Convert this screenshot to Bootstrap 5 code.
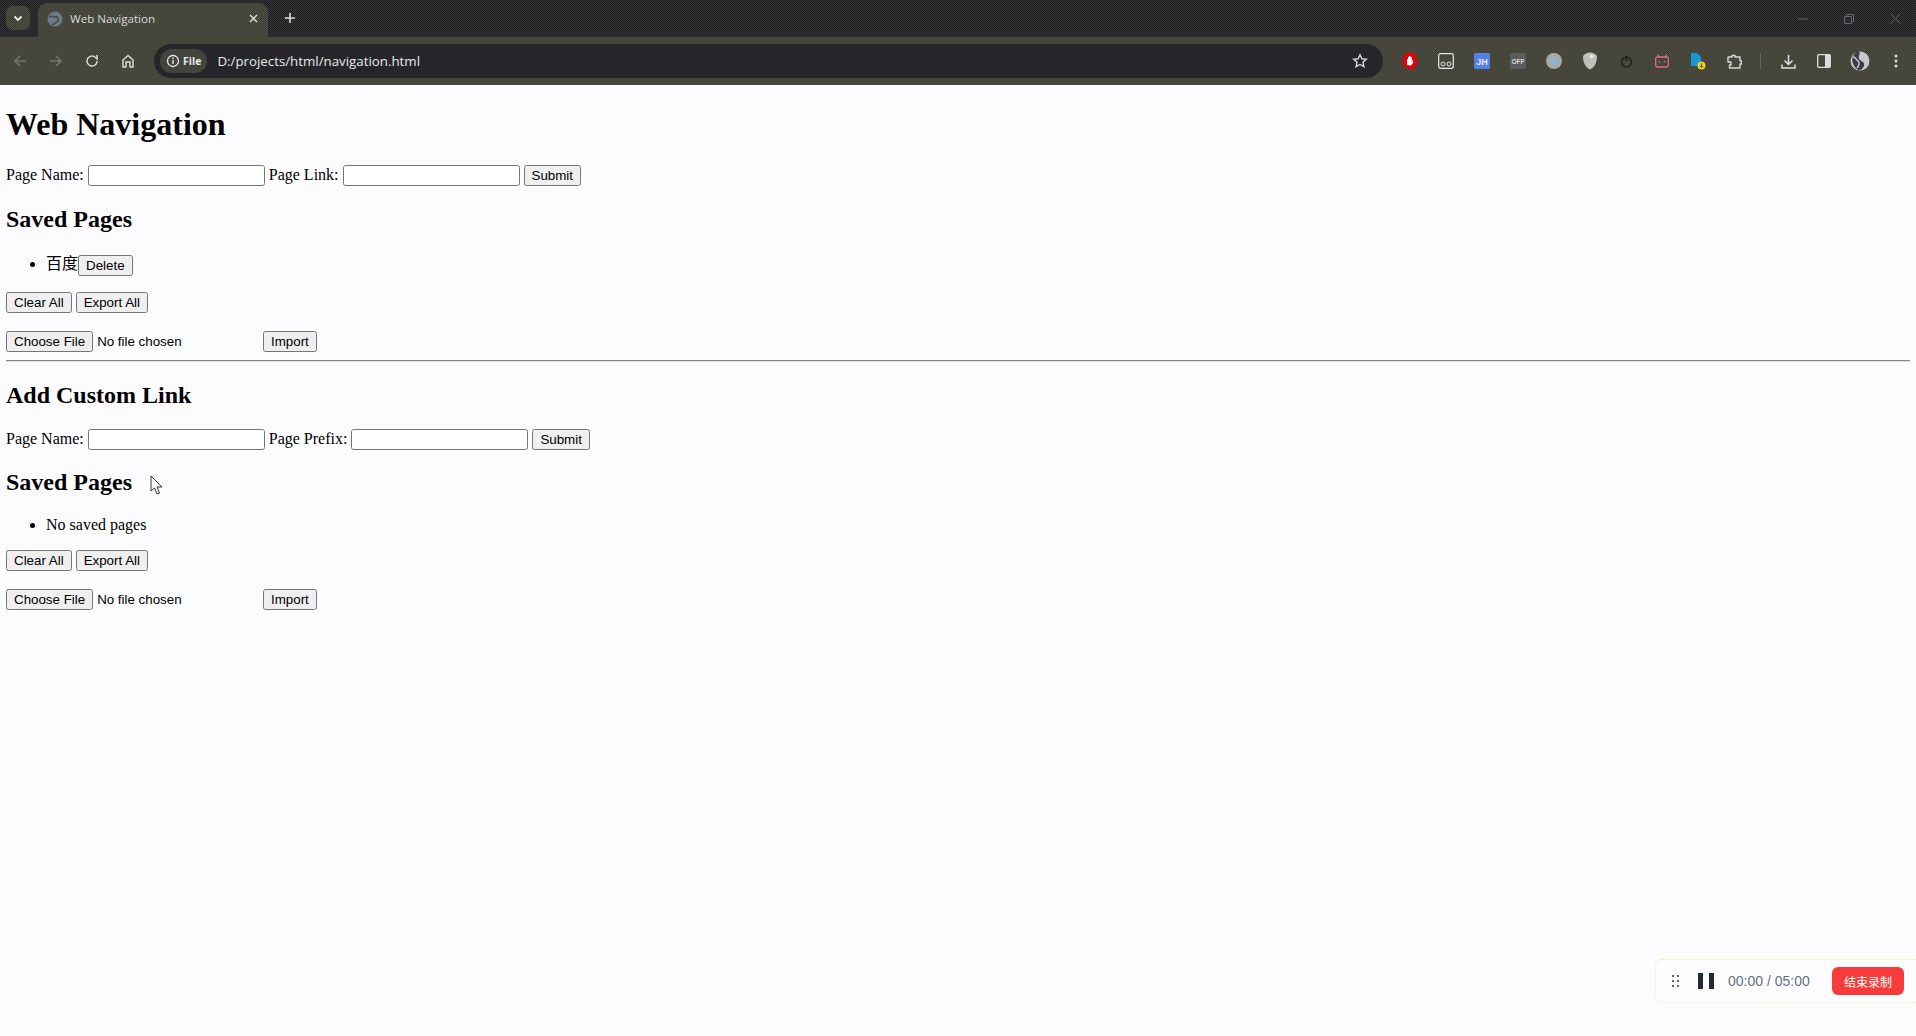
<!DOCTYPE html>
<html lang="en">
<head>
<meta charset="utf-8">
<title>Web Navigation</title>
<link href="https://cdn.jsdelivr.net/npm/bootstrap@5.3.0/dist/css/bootstrap.min.css" rel="stylesheet">
<style>
html,body{height:100%}
body{background:#fcfcff;color:#000;font-family:"Liberation Serif","Noto Sans CJK SC",serif;font-size:16px;line-height:normal;overflow:hidden;position:relative}
.tabstrip{height:37px;background:conic-gradient(#333335 25%,#212123 0 50%,#333335 0 75%,#212123 0) 0 0/2px 2px;color:#ddd;font-family:"Open Sans",sans-serif}
.tabchip{width:24px;height:24px;margin:6px 0 0 6px;background:conic-gradient(#51512e 25%,#3b3b4a 0 50%,#51512e 0 75%,#3b3b4a 0) 0 0/2px 2px;border-radius:7px}
.brtab{width:230px;height:34px;margin:3px 0 0 8px;background:conic-gradient(#51512e 25%,#3b3b4a 0 50%,#51512e 0 75%,#3b3b4a 0) 0 0/2px 2px;border-radius:9px 9px 0 0;padding:0 10px 3px 9px;font-size:11.6px;color:#d8d8d8;flex-shrink:0}
.favi{margin-right:7px}
.newtab{margin-left:16px;margin-top:-1px}
.winctl{gap:36px;padding-right:15px;margin-left:auto}
.toolbar{height:48px;background:conic-gradient(#51512e 25%,#3b3b4a 0 50%,#51512e 0 75%,#3b3b4a 0) 0 0/2px 2px;padding-left:12px;font-family:"Open Sans",sans-serif;color:#d0d0d0}
.navbtns{gap:20px;width:136px;flex-shrink:0}
.omni{width:1229px;height:34px;border-radius:17px;background:#26262a;padding:0 15px 0 6px;margin-left:6px;color:#e8e8e8;font-size:13.3px;flex-shrink:0}
.fileChip{height:24px;padding:0 6px;background:#44443f;border-radius:12px;font-size:10.5px;font-weight:700;gap:3px;margin-right:10px}
.exticons{margin-left:9px;flex-shrink:0}
.exticons>*{width:36px;display:flex;justify-content:center;align-items:center}
.exticons>.sepcell{width:18px}
.pagewrap{padding:0 6px}
.title1{font:700 32px "Liberation Serif",serif;margin:21.44px 0}
.title2{font:700 24px "Liberation Serif",serif;margin:19.92px 0}
.fieldrow{height:21px;display:flex;align-items:center;white-space:pre}
.tinput{width:177px;height:21px;border:1px solid #767676;border-radius:2.5px;background:#fff;padding:0;margin:0 4px}
.natbtn{font:13.33px "Liberation Sans",sans-serif;height:21px;padding:0 7px;border:1px solid #767676;border-radius:2.5px;background:#efefef;color:#000;margin:0}
.filepick{font:13.33px "Liberation Sans",sans-serif;width:253px;height:21px;margin:0;color:#000}
.filepick::file-selector-button{font:13.33px "Liberation Sans",sans-serif;height:21px;padding:0 7px;border:1px solid #767676;border-radius:2.5px;background:#efefef;color:#000;margin-right:4px}
.savedlist{margin:19.92px 0 16px;padding-left:40px}
.savedlist li{height:23px;line-height:21px}
.savedlist li.plainitem{height:18px;line-height:18px}
.delbtn{vertical-align:top;margin-top:2px}
.actrow{margin-bottom:18px;height:21px}
.rule{border:0;border-top:1px solid #858585;border-bottom:1px solid #e2e2e6;opacity:1;margin:8px 0}
.ptr{position:absolute;left:150px;top:475px}
.recorder{position:absolute;right:0;top:959px;width:261px;height:44px;border:1px dotted #f0ecb8;border-right:0;border-radius:8px 0 0 8px;background:#fdfdff;padding:0 12px 0 16px;font:14px "Liberation Sans",sans-serif;color:#667085}
.pausegap{margin-left:18px}
.timegap{margin-left:14px}
.stopbtn{width:72px;height:28px;background:#f73b3b;border-radius:6px;color:#fff;font:12px "Noto Sans CJK SC",sans-serif;display:flex;align-items:center;justify-content:center;margin-left:auto}
</style>
</head>
<body>
<div class="tabstrip d-flex">
  <div class="tabchip d-flex align-items-center justify-content-center"><svg width="10" height="7" viewBox="0 0 10 7"><path d="M1.500 1.500 5 5l3.500-3.500" fill="none" stroke="#eee" stroke-width="1.800"/></svg></div>
  <div class="brtab d-flex align-items-center">
    <svg width="16" height="16" viewBox="0 0 16 16" class="favi"><circle cx="8" cy="8" r="7.500" fill="#6d7a84"/><path d="M2 6c3-2 5 1 7 0s3 3 1 5-4 2-5 3" fill="none" stroke="#454d52" stroke-width="1.700"/></svg>
    <span>Web Navigation</span>
    <svg class="ms-auto" width="9" height="9" viewBox="0 0 9 9"><path d="M1 1l7 7M8 1 1 8" stroke="#e0e0e0" stroke-width="1.400"/></svg>
  </div>
  <div class="newtab d-flex align-items-center"><svg width="12" height="12" viewBox="0 0 12 12"><path d="M6 1v10M1 6h10" stroke="#ddd" stroke-width="1.600"/></svg></div>
  <div class="winctl d-flex align-items-center">
    <svg width="10" height="10" viewBox="0 0 10 10"><path d="M0 5h10" stroke="#66666a"/></svg>
    <svg width="10" height="10" viewBox="0 0 10 10"><path d="M.5 2.500h7v7h-7zM2.500 2.500v-2h7v7h-2" fill="none" stroke="#66666a"/></svg>
    <svg width="11" height="11" viewBox="0 0 11 11"><path d="M.5.5l10 10M10.500.5l-10 10" stroke="#66666a"/></svg>
  </div>
</div>
<div class="toolbar d-flex align-items-center">
  <div class="navbtns d-flex align-items-center">
    <svg width="16" height="16" viewBox="0 0 16 16"><path d="M14 8H3M8 3 3 8l5 5" fill="none" stroke="#77776e" stroke-width="1.500"/></svg>
    <svg width="16" height="16" viewBox="0 0 16 16"><path d="M2 8h11M8 3l5 5-5 5" fill="none" stroke="#77776e" stroke-width="1.500"/></svg>
    <svg width="16" height="16" viewBox="0 0 16 16"><path d="M13 8a5 5 0 1 1-1.500-3.500L13 6V2" fill="none" stroke="#d8d8d8" stroke-width="1.500"/></svg>
    <svg width="16" height="16" viewBox="0 0 16 16"><path d="M3 14V7l5-4.500L13 7v7h-3V9H6v5z" fill="none" stroke="#d8d8d8" stroke-width="1.500"/></svg>
  </div>
  <div class="omni d-flex align-items-center">
    <div class="fileChip d-flex align-items-center"><svg width="14" height="14" viewBox="0 0 14 14"><circle cx="7" cy="7" r="5.500" fill="none" stroke="#e8e8e8" stroke-width="1.300"/><path d="M7 6v4M7 3.500v1.500" stroke="#e8e8e8" stroke-width="1.400"/></svg>File</div>
    <span>D:/projects/html/navigation.html</span>
    <svg class="ms-auto" width="16" height="16" viewBox="0 0 16 16"><path d="m8 1.800 1.900 4 4.400.5-3.300 3 .9 4.400L8 11.500l-3.900 2.200.9-4.400-3.300-3 4.400-.5z" fill="none" stroke="#d8d8d8" stroke-width="1.400"/></svg>
  </div>
  <div class="exticons d-flex align-items-center">
    <span><svg width="16" height="18" viewBox="0 0 16 18"><ellipse cx="8" cy="9" rx="7.500" ry="8.500" fill="#e5000a"/><path d="M5 13V7h1V5h1v3-4h1.500v4V5H10v4l1-1v3l-2 2.500z" fill="#fff"/></svg></span>
    <span><svg width="16" height="16" viewBox="0 0 16 16"><rect x=".7" y=".7" width="14.600" height="14.600" rx="2" fill="none" stroke="#e8e8e8" stroke-width="1.200"/><circle cx="5" cy="11" r="2" fill="none" stroke="#e8e8e8"/><circle cx="11" cy="11" r="2" fill="none" stroke="#e8e8e8"/></svg></span>
    <span><svg width="16" height="16" viewBox="0 0 16 16"><rect width="16" height="16" rx="1.500" fill="#5580ea"/><text x="8" y="11.500" font-size="9" font-weight="700" font-family="Liberation Sans" fill="#e8eeff" text-anchor="middle">JH</text></svg></span>
    <span><svg width="16" height="16" viewBox="0 0 16 16"><rect width="16" height="16" rx="1" fill="#5b5b5b"/><text x="8" y="10.500" font-size="6.500" font-weight="700" font-family="Liberation Sans" fill="#d8d8d8" text-anchor="middle">OFF</text></svg></span>
    <span><svg width="16" height="16" viewBox="0 0 16 16"><circle cx="8" cy="8" r="8" fill="#a9a9a4"/><circle cx="8" cy="8" r="4" fill="#8cb2d8"/></svg></span>
    <span><svg width="16" height="18" viewBox="0 0 16 18"><path d="M1 4c2-3 5-3.500 7-3.500S13 1 15 4c0 6-2 11-7 13.500C3 15 1 10 1 4z" fill="#c0c0bc"/><circle cx="9.500" cy="4.500" r="2" fill="#e6e6e2"/></svg></span>
    <span><svg width="13" height="13" viewBox="0 0 13 13"><circle cx="6.500" cy="7" r="5" fill="none" stroke="#1f1f1c" stroke-width="1.500"/><path d="M6.500 1v5" stroke="#1f1f1c" stroke-width="1.500"/></svg></span>
    <span><svg width="14" height="14" viewBox="0 0 14 14"><rect x=".7" y="3" width="12.600" height="10" rx="1.500" fill="none" stroke="#e06c86" stroke-width="1.300"/><path d="M4 3 2.500.5M10 3l1.500-2.500M4.500 7v1.500M9.500 7v1.500" stroke="#e06c86" stroke-width="1.200"/></svg></span>
    <span><svg width="15" height="17" viewBox="0 0 15 17"><path d="M0 0h6l4 4v9H0z" fill="#1796d6"/><circle cx="10.500" cy="12.500" r="4" fill="#efcb20"/><path d="M10.500 10.500v3.500M9 13l1.500 1.500L12 13" fill="none" stroke="#555" stroke-width="1"/></svg></span>
    <span><svg width="15" height="15" viewBox="0 0 15 15"><path d="M1 3h4V1.500h3V3h5v4H14.500v3H13v4H2.500v-3h1.500V8H1z" fill="none" stroke="#d8d8d8" stroke-width="1.400" stroke-linejoin="round"/></svg></span>
    <span class="sepcell"><svg width="2" height="16"><rect width="1" height="16" fill="#66665c"/></svg></span>
    <span><svg width="15" height="15" viewBox="0 0 15 15"><path d="M7.500 1v9M3.500 6.500l4 4 4-4M1 10.500v3.500h13v-3.500" fill="none" stroke="#e0e0e0" stroke-width="1.500"/></svg></span>
    <span><svg width="14" height="14" viewBox="0 0 14 14"><rect x=".7" y=".7" width="12.600" height="12.600" rx="1" fill="none" stroke="#dcdcdc" stroke-width="1.300"/><rect x="8" y="1" width="5" height="12" fill="#dcdcdc"/></svg></span>
    <span><svg width="20" height="20" viewBox="0 0 20 20"><circle cx="10" cy="10" r="9.500" fill="#c8c8cc"/><path d="M9 .5c-6 1-8 7-6 12s5 6 6 7c3-1 6-4 5-7s-4-2-5-5 2-5 0-7z" fill="#3c3c44"/><path d="M3 6c3 0 3 3 5 4s1 5-1 7" fill="none" stroke="#c8c8cc" stroke-width="1.500"/></svg></span>
    <span><svg width="4" height="14" viewBox="0 0 4 14"><circle cx="2" cy="2" r="1.500" fill="#dcdcdc"/><circle cx="2" cy="7" r="1.500" fill="#dcdcdc"/><circle cx="2" cy="12" r="1.500" fill="#dcdcdc"/></svg></span>
  </div>
</div>
<div class="pagewrap">
  <h1 class="title1">Web Navigation</h1>
  <form class="fieldrow">Page Name:<input class="tinput" type="text">Page Link:<input class="tinput" type="text"><button type="button" class="natbtn">Submit</button></form>
  <h2 class="title2">Saved Pages</h2>
  <ul class="savedlist"><li><span>百度</span><button type="button" class="natbtn delbtn">Delete</button></li></ul>
  <div class="d-flex gap-1 actrow"><button type="button" class="natbtn">Clear All</button><button type="button" class="natbtn">Export All</button></div>
  <div class="d-flex gap-1"><input type="file" class="filepick"><button type="button" class="natbtn">Import</button></div>
  <hr class="rule">
  <h2 class="title2">Add Custom Link</h2>
  <form class="fieldrow">Page Name:<input class="tinput" type="text">Page Prefix:<input class="tinput" type="text"><button type="button" class="natbtn">Submit</button></form>
  <h2 class="title2">Saved Pages</h2>
  <ul class="savedlist"><li class="plainitem">No saved pages</li></ul>
  <div class="d-flex gap-1 actrow"><button type="button" class="natbtn">Clear All</button><button type="button" class="natbtn">Export All</button></div>
  <div class="d-flex gap-1"><input type="file" class="filepick"><button type="button" class="natbtn">Import</button></div>
</div>
<svg class="ptr" width="14" height="21" viewBox="0 0 14 21"><path d="M1 1v15l3.500-3 2.500 6 2.500-1-2.500-6H12z" fill="#fff" stroke="#333" stroke-width="1"/></svg>
<div class="recorder d-flex align-items-center">
  <svg width="8" height="12" viewBox="0 0 8 12"><g fill="#666"><rect width="2" height="2"/><rect x="5" width="2" height="2"/><rect y="5" width="2" height="2"/><rect x="5" y="5" width="2" height="2"/><rect y="10" width="2" height="2"/><rect x="5" y="10" width="2" height="2"/></g></svg>
  <svg class="pausegap" width="16" height="16" viewBox="0 0 16 16"><rect width="5" height="16" fill="#1f2937"/><rect x="11" width="5" height="16" fill="#1f2937"/></svg>
  <span class="timegap">00:00 / 05:00</span>
  <div class="stopbtn">结束录制</div>
</div>
</body>
</html>
